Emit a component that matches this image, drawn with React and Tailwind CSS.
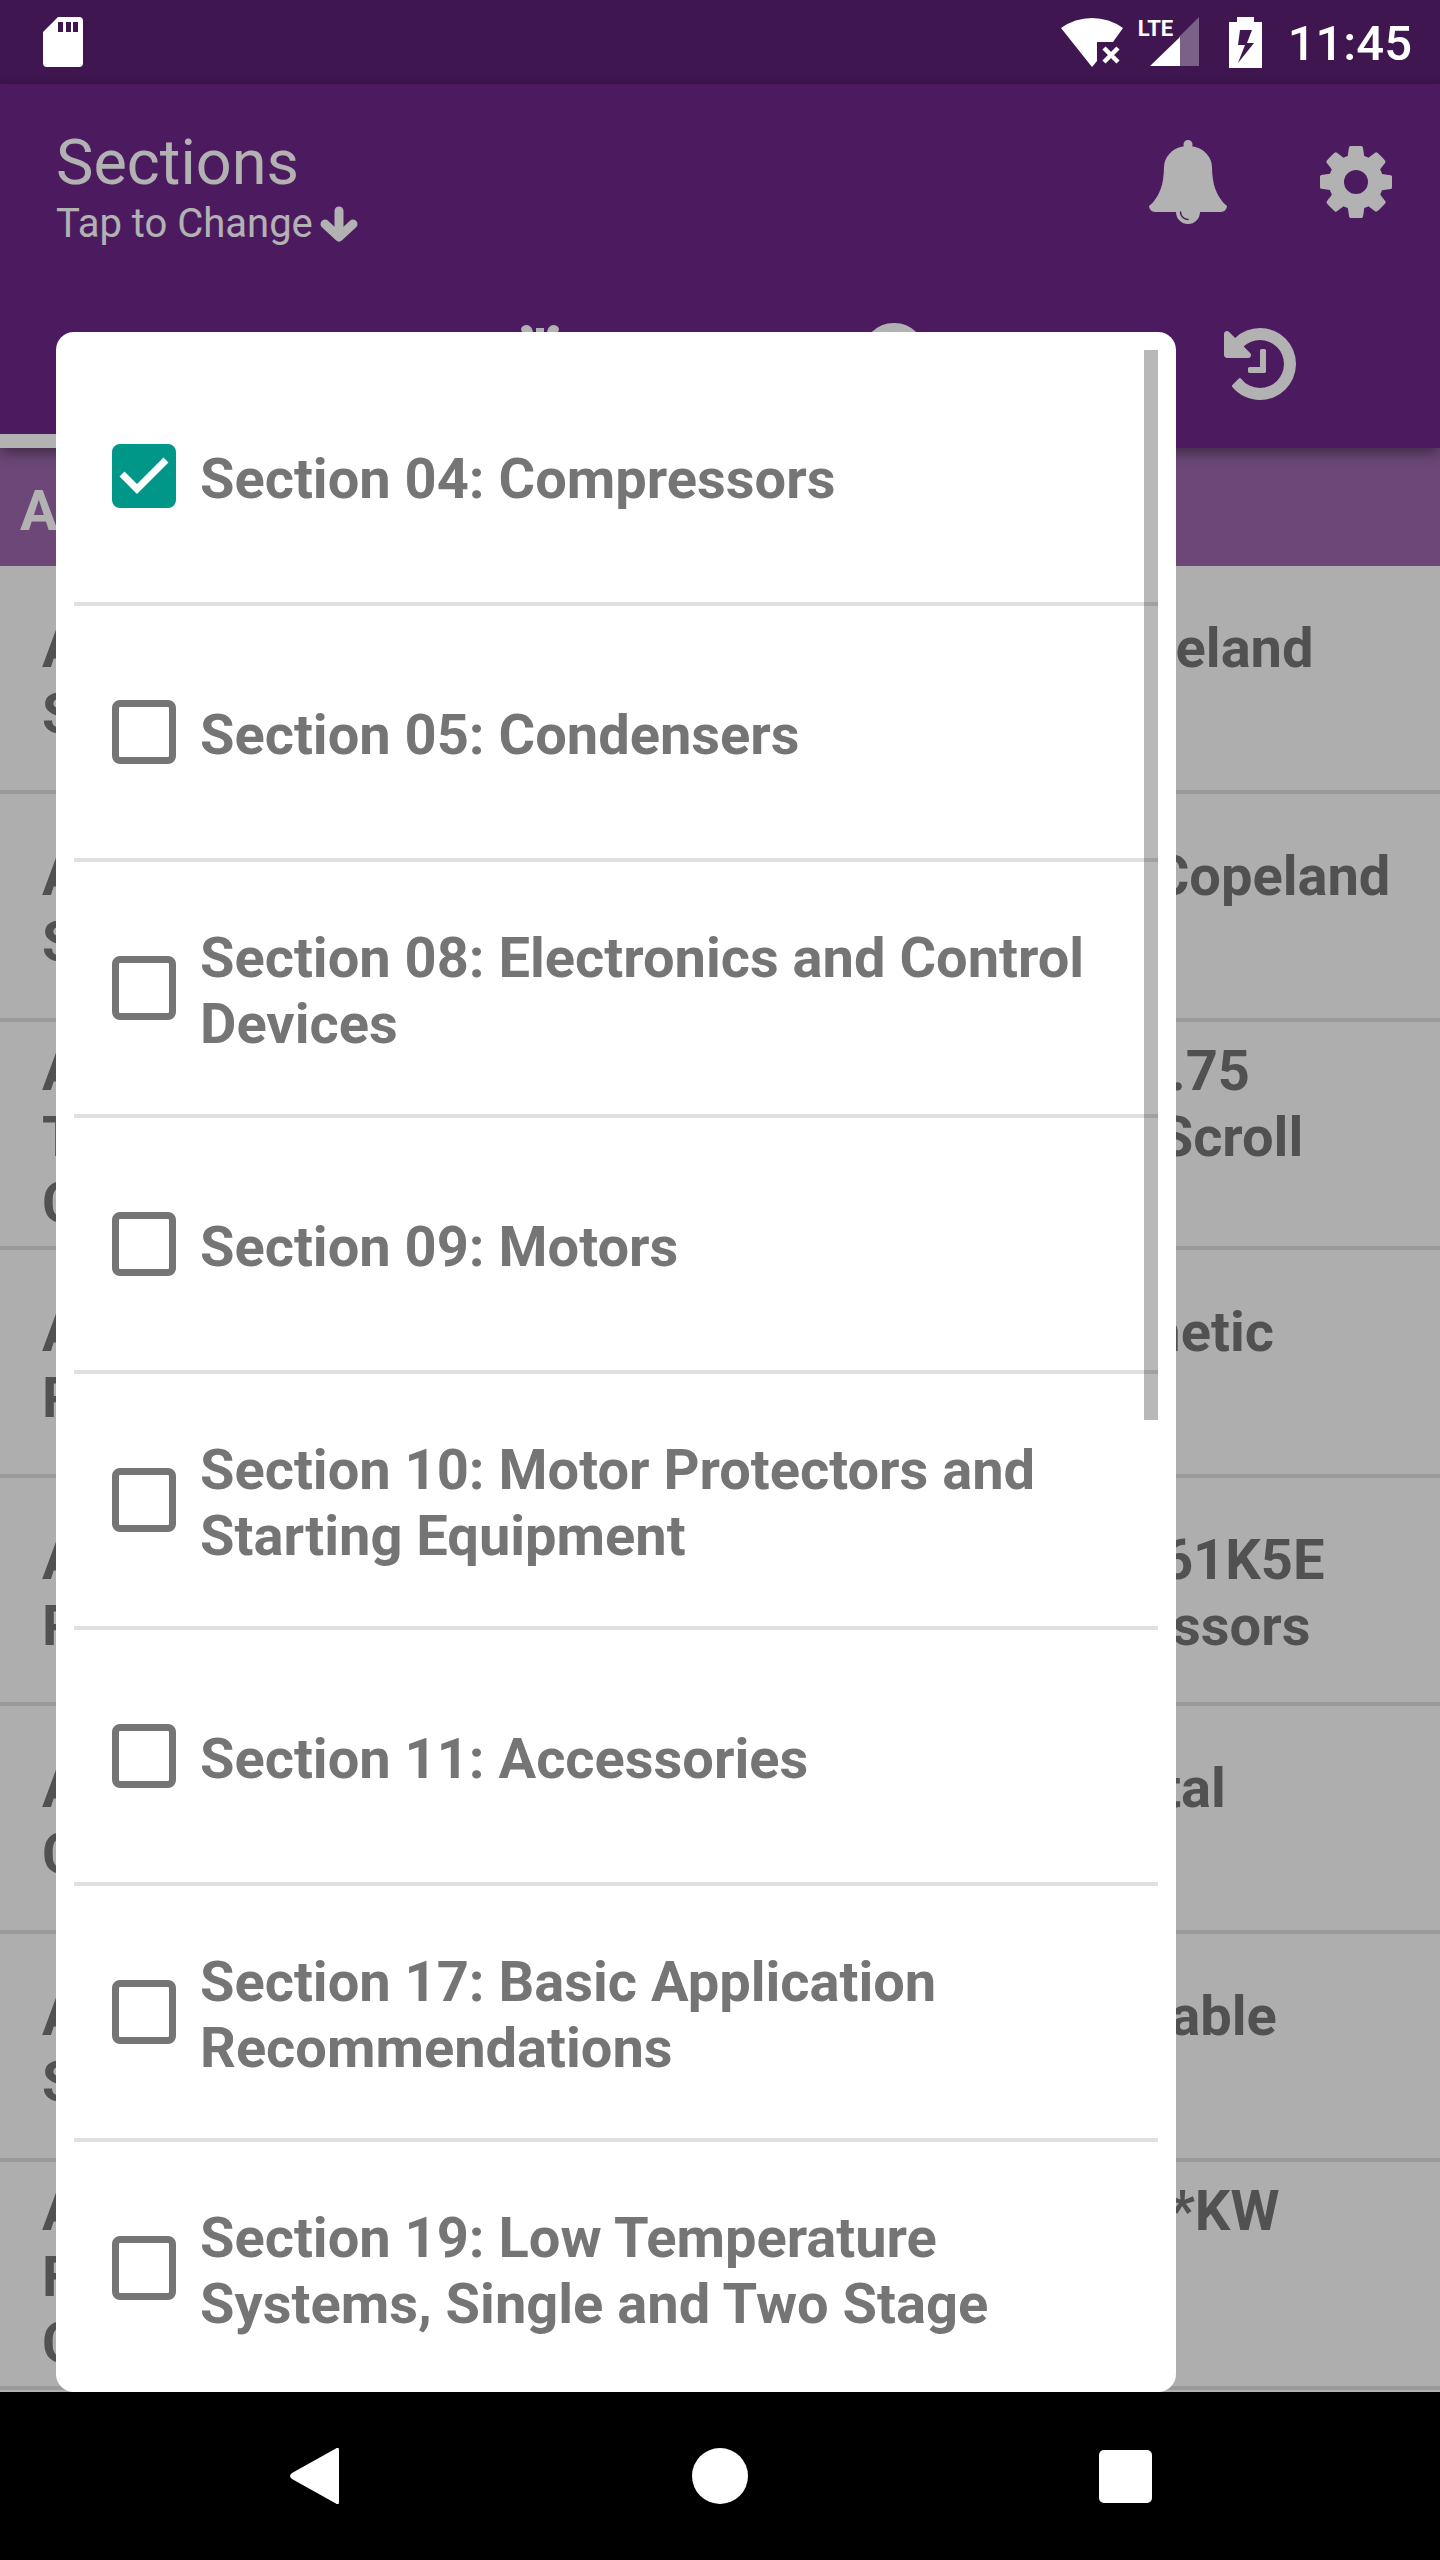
import { useState } from 'react';

const sections = [
  'Section 04: Compressors',
  'Section 05: Condensers',
  'Section 08: Electronics and Control Devices',
  'Section 09: Motors',
  'Section 10: Motor Protectors and Starting Equipment',
  'Section 11: Accessories',
  'Section 17: Basic Application Recommendations',
  'Section 19: Low Temperature Systems, Single and Two Stage',
];

const bulletins = [
  ['AE4-1312 R2: 1.5 to 5 Ton R-410A Temp Copeland', 'Scroll Compressors'],
  ['AE4-1303: 7 to 15 Ton R-410A ZP Hermetic Copeland', 'Scroll Compressors'],
  ['AE4-1331 R4: ZP 16-18 to ZP44 K3E 1.5 to 3.75', 'Ton R-410A Low Application R-22 Copeland Scroll', 'Compressors'],
  ['AE4-1317 R7: HP and Discus and Semi-Hermetic', 'Refrigeration Compressors'],
  ['AE4-1365 R3: High ZP Scroll ZP14K5E to ZP61K5E', 'R-410A the Variable Copeland Scroll Compressors'],
  ['AE4-1299 R5: High Low Copeland Scroll Digital', 'Compressors'],
  ['AE4-1388 R2: ZR Phase Copeland Scroll Variable', 'Speed Compressors'],
  ['AE4-1383 R8: High Refrigeration in Scroll ZB*KW', 'For Vapor Injection', 'Compressors'],
];

const bellPath =
  'M912 1696q0-16-16-16-59 0-101.5-42.5t-42.5-101.5q0-16-16-16t-16 16q0 73 51.5 124.5t124.5 51.5q16 0 16-16zm816-288q0 52-38 90t-90 38h-448q0 106-75 181t-181 75-181-75-75-181h-448q-52 0-90-38t-38-90q50-42 91-88t85-119.5 74.5-158.5 50-206 19.5-260q0-152 117-282.5t307-158.5q-8-19-8-39 0-40 28-68t68-28 68 28 28 68q0 20-8 39 190 28 307 158.5t117 282.5q0 139 19.5 260t50 206 74.5 158.5 85 119.5 91 88z';

const cogPath =
  'M1152 896q0-106-75-181t-181-75-181 75-75 181 75 181 181 75 181-75 75-181zm512-109v222q0 12-8 23t-20 13l-185 28q-19 54-39 91 35 50 107 138 10 12 10 25t-9 23q-27 37-99 108t-94 71q-12 0-26-9l-138-108q-44 23-91 38-16 136-29 186-7 28-36 28h-222q-14 0-24.5-8.5t-11.5-21.5l-28-184q-49-16-90-37l-141 107q-10 9-25 9-14 0-25-11-126-114-165-168-7-10-7-23 0-12 8-23 15-21 51-66.5t54-70.5q-27-50-41-99l-183-27q-13-2-21-12.5t-8-23.5v-222q0-12 8-23t19-13l186-28q14-46 39-92-40-57-107-138-10-12-10-24 0-10 9-23 26-36 98.5-107.5t94.5-71.5q13 0 26 10l138 107q44-23 91-38 16-136 29-186 7-28 36-28h222q14 0 24.5 8.5t11.5 21.5l28 184q49 16 90 37l142-107q9-9 24-9 13 0 25 10 129 119 165 170 7 8 7 22 0 12-8 23-15 21-51 66.5t-54 70.5q26 50 41 98l183 28q13 2 21 12.5t8 23.5z';

const historyPath =
  'M1664 896q0 156-61 298t-164 245-245 164-298 61q-172 0-327-72.5t-264-204.5q-7-10-6.5-22.5t8.5-20.5l137-138q10-9 25-9 16 2 23 12 73 95 179 147t225 52q104 0 198.5-40.5t163.5-109.5 109.5-163.5 40.5-198.5-40.5-198.5-109.5-163.5-163.5-109.5-198.5-40.5q-98 0-188 35.5t-160 101.5l137 138q31 30 14 69-17 40-59 40h-448q-26 0-45-19t-19-45v-448q0-42 40-59 39-17 69 14l130 129q107-101 244.5-156.5t284.5-55.5q156 0 298 61t245 164 164 245 61 298zm-640-288v448q0 14-9 23t-23 9h-320q-14 0-23-9t-9-23v-64q0-14 9-23t23-9h224v-352q0-14 9-23t23-9h64q14 0 23 9t9 23z';

function Glyph({ path }) {
  return (
    <svg viewBox="0 0 1792 1792" className="size-[84px] fill-current">
      <path d={path} />
    </svg>
  );
}

function StatusBar() {
  return (
    <div className="flex h-[84px] items-center bg-[#3f1650] pl-[43px] pr-7 text-white">
      <svg viewBox="0 0 40 50" className="h-[50px] w-10">
        <path
          fill="currentColor"
          fillRule="evenodd"
          d="M15 0H36a4 4 0 0 1 4 4V46a4 4 0 0 1-4 4H4a4 4 0 0 1-4-4V15ZM15 5V15H20V5ZM23 5V15H28V5ZM30 5V15H35V5Z"
        />
      </svg>
      <div className="ml-auto flex items-center">
        <svg viewBox="0 0 62 50" className="h-[50px] w-[62px] fill-current">
          <path d="M0 11Q14 1 31 1T62 11L52 25H36V44L31 50Z" />
          <path d="M43 31L57 45M57 31L43 45" stroke="currentColor" strokeWidth="4.5" />
        </svg>
        <div className="relative ml-[15px]">
          <svg viewBox="0 0 61 50" className="h-[50px] w-[61px]">
            <path d="M61 0V49H41V20Z" fill="#7c6187" />
            <path d="M12 49L42 20V49Z" fill="currentColor" />
          </svg>
          <span className="absolute left-0 top-0 text-[22px] font-bold leading-6">LTE</span>
        </div>
        <svg viewBox="0 0 33 51" className="ml-[30px] h-[51px] w-[33px]">
          <path fill="currentColor" fillRule="evenodd" d="M8 0H25V5H33V51H0V5H8ZM11 13L9 28H16L9 46L25 26H18L23 13Z" />
        </svg>
        <span className="ml-[26px] pt-1 text-[49px] font-medium leading-[60px]">11:45</span>
      </div>
    </div>
  );
}

function Header() {
  return (
    <header className="relative z-10 bg-[#6d2889] text-white shadow-[0_4px_14px_rgba(0,0,0,0.45)]">
      <div className="flex h-[196px] items-center justify-between pl-14 pr-[42px]">
        <button className="pt-2 text-left">
          <span className="block text-[63px] leading-[76px]">Sections</span>
          <span className="flex items-center gap-1.5 text-[40px] leading-[46px]">
            Tap to Change
            <svg viewBox="0 0 40 40" className="size-10 fill-none stroke-current" strokeWidth="9" strokeLinecap="round">
              <path d="M20 7V30" />
              <path d="M6 20L20 33L34 20" strokeLinejoin="round" />
            </svg>
          </span>
        </button>
        <div className="flex items-center gap-[84px]">
          <button aria-label="Notifications">
            <Glyph path={bellPath} />
          </button>
          <button aria-label="Settings">
            <Glyph path={cogPath} />
          </button>
        </div>
      </div>
      <nav className="grid h-[168px] grid-cols-4">
        <button aria-label="List" className="border-b-[14px] border-white" />
        <button aria-label="Products" className="flex items-center justify-center">
          <svg viewBox="0 0 84 84" className="size-[84px] fill-current">
            <path d="M23 7Q24 3 29 3Q34 4 35 10L37 25H28ZM61 7Q60 3 55 3Q50 4 49 10L47 25H56ZM38 6H46V25H38Z" />
            <rect x="16" y="24" width="52" height="56" rx="8" />
          </svg>
        </button>
        <button aria-label="Search" className="flex items-center justify-center pr-3">
          <svg viewBox="0 0 84 84" className="size-[84px] fill-none stroke-current" strokeWidth="12">
            <circle cx="42" cy="33" r="26" />
            <path d="M42 58V82" />
          </svg>
        </button>
        <button aria-label="History" className="flex items-center justify-center">
          <Glyph path={historyPath} />
        </button>
      </nav>
    </header>
  );
}

function SectionsDialog() {
  const [checked, setChecked] = useState([sections[0]]);

  const toggle = (name) =>
    setChecked(checked.includes(name) ? checked.filter((c) => c !== name) : [...checked, name]);

  return (
    <div role="dialog" aria-label="Sections" className="absolute inset-y-0 left-14 right-[264px] mt-[248px] overflow-hidden rounded-[18px] bg-white p-[18px]">
      <div className="relative h-full overflow-hidden">
        <ul className="divide-y-4 divide-[#e0e0e0]">
          {sections.map((name) => (
            <li key={name}>
              <label className="flex h-[252px] items-center gap-6 pl-[38px] pr-8 text-[56px] font-bold leading-[66px] text-[#757575]">
                <span className="relative size-16 shrink-0">
                  <input
                    type="checkbox"
                    checked={checked.includes(name)}
                    onChange={() => toggle(name)}
                    className="peer block size-16 appearance-none rounded-lg border-[7px] border-[#757575] checked:border-[#009688] checked:bg-[#009688]"
                  />
                  <svg viewBox="0 0 64 64" className="pointer-events-none absolute inset-0 hidden size-16 fill-none stroke-white peer-checked:block" strokeWidth="7">
                    <path d="M10 30L25 45L54 16" />
                  </svg>
                </span>
                <span className="pt-1.5">{name}</span>
              </label>
            </li>
          ))}
        </ul>
        <div className="absolute right-0 top-0 h-[1070px] w-[14px] bg-black/28" />
      </div>
    </div>
  );
}

function NavBar() {
  return (
    <div className="grid h-[168px] grid-cols-3 place-items-center bg-black px-[112px] text-white">
      <button aria-label="Back">
        <svg viewBox="0 0 56 56" className="size-14 fill-current">
          <path d="M52 2V54Q52 58 48 55L5 31Q1 28 5 25L48 1Q52-2 52 2Z" />
        </svg>
      </button>
      <button aria-label="Home" className="size-14 rounded-full bg-white" />
      <button aria-label="Recent apps" className="size-[53px] rounded-[5px] bg-white" />
    </div>
  );
}

export default function App() {
  return (
    <div className="flex min-h-screen flex-col font-[Roboto,sans-serif]">
      <StatusBar />
      <div className="relative flex-1">
        <Header />
        <h2 className="h-[118px] bg-[#9b66ac] px-5 text-[56px] font-bold leading-[126px] text-white">AE Bulletins</h2>
        <ul className="bg-[#fafafa]">
          {bulletins.map((lines) => (
            <li key={lines[0]} className="flex h-[228px] flex-col justify-center whitespace-nowrap border-b-4 border-[#dddddd] px-[42px] pt-1.5 text-[56px] font-bold leading-[66px] text-[#757575]">
              {lines.map((line) => (
                <span key={line}>{line}</span>
              ))}
            </li>
          ))}
        </ul>
        <div className="absolute inset-0 z-20 bg-black/30" />
        <div className="absolute inset-0 z-30">
          <SectionsDialog />
        </div>
      </div>
      <NavBar />
    </div>
  );
}
